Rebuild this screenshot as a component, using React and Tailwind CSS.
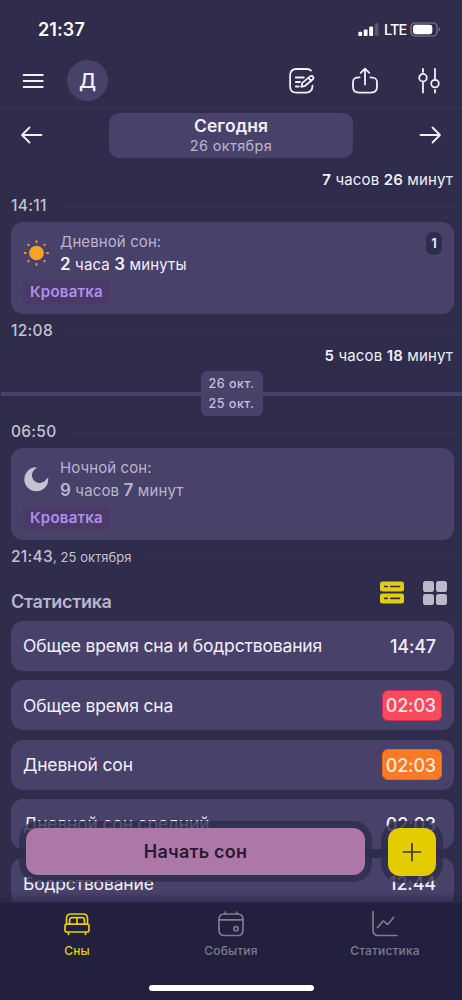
import React from "react";

function StatusBar() {
  return (
    <div className="flex h-[54px] items-center justify-between pt-[5px] pl-[38px] pr-[21px]">
      <span className="text-[18px] font-semibold tracking-[0.1px] text-white">21:37</span>
      <div className="flex items-center">
        <svg width="21" height="14" viewBox="0 0 21 14" fill="#fff">
          <rect x="0.3" y="8.8" width="3.9" height="4.2" rx="1" />
          <rect x="5.7" y="6.6" width="3.9" height="6.4" rx="1" />
          <rect x="11.2" y="3.6" width="3.9" height="9.4" rx="1" />
          <rect x="16.7" y="0.3" width="3.7" height="12.7" rx="1" opacity="0.2" />
        </svg>
        <span className="ml-[5px] w-[22px] text-[14.500px] leading-[18px] font-medium tracking-[-0.900px] text-white">LTE</span>
        <svg className="ml-[4px]" width="31" height="15" viewBox="0 0 31 15">
          <rect x="1" y="1" width="26" height="13" rx="4" fill="none" stroke="#fff" strokeOpacity="0.4" strokeWidth="1.2" />
          <rect x="3" y="2.800" width="19.3" height="9.4" rx="2.4" fill="#fff" />
          <path d="M28.8 5.2v4.4c1.4-.6 1.4-3.8 0-4.4z" fill="#fff" opacity="0.45" />
        </svg>
      </div>
    </div>
  );
}

function Header() {
  return (
    <header className="flex h-[54px] items-center border-b border-[#3b365a] pl-[22px] pr-[20px]">
      <svg width="22" height="16" viewBox="0 0 22 16" stroke="#f2effc" strokeWidth="1.8" strokeLinecap="round">
        <path d="M1.6 2h19.2M1.6 8h19.2M1.6 14h19.2" />
      </svg>
      <div className="ml-[23px] flex size-[41px] items-center justify-center rounded-full bg-[#48416a] pt-[2px] text-[20.500px] font-medium text-[#f2effc]">Д</div>
      <svg className="ml-auto" width="28" height="28" viewBox="0 0 28 28" fill="none" stroke="#f2effc" strokeWidth="1.800" strokeLinecap="round" strokeLinejoin="round">
        <path d="M23 3.6C22 2.400 20.500 2 18.500 2H8.500C4 2 2.100 3.900 2.100 8.400v10.800c0 4.500 1.900 6.400 6.400 6.400h9.600c4.500 0 6.400-1.900 6.400-7" />
        <path d="M7.800 10.500h8M7.800 15h4.200M7.800 19.500h3" />
        <path d="M13.400 19.800l.9-3.900 7.800-6.500c1-.8 2.200-.6 2.900.3.700.9.500 2-.4 2.800l-7.500 6.300zM20.500 10.900l2.700 3.100" />
      </svg>
      <svg className="ml-[35px]" width="28" height="28" viewBox="0 0 28 28" fill="none" stroke="#f2effc" strokeWidth="1.800" strokeLinecap="round" strokeLinejoin="round">
        <path d="M14 17.500V2M9.700 5.900L14 1.600l4.300 4.300" />
        <path d="M8.600 10.300C4 10.300 2 11.500 2 15.500v4.300c0 4.300 1.800 5.800 6 5.800h12c4.200 0 6-1.500 6-5.800v-4.300c0-4-2-5.200-6.600-5.200" />
      </svg>
      <svg className="ml-[37px]" width="26" height="28" viewBox="0 0 26 28" fill="none" stroke="#f2effc" strokeWidth="1.800" strokeLinecap="round">
        <path d="M7 2v3M7 16v9.500M19 2v11M19 23v2.500" />
        <circle cx="7" cy="10.700" r="3.800" />
        <circle cx="19" cy="16.600" r="3.800" />
      </svg>
    </header>
  );
}

function DateBar() {
  return (
    <div className="flex h-[54px] items-center justify-between px-[20px]">
      <svg width="24" height="18" viewBox="0 0 24 18" fill="none" stroke="#f2effc" strokeWidth="1.8" strokeLinecap="round" strokeLinejoin="round">
        <path d="M21.500 9H2M9.500 1.500L2 9l7.500 7.500" />
      </svg>
      <div className="flex h-[45px] w-[244px] flex-col items-center rounded-[10px] bg-[#48416a] pt-[2px]">
        <span className="text-[17.500px] leading-[22px] font-semibold tracking-[0.1px] text-[#f2effc]">Сегодня</span>
        <span className="text-[14.500px] leading-[17px] tracking-[0.350px] text-[#bab5cd]">26 октября</span>
      </div>
      <svg width="24" height="18" viewBox="0 0 24 18" fill="none" stroke="#f2effc" strokeWidth="1.8" strokeLinecap="round" strokeLinejoin="round">
        <path d="M2.500 9H22M14.500 1.500L22 9l-7.500 7.500" />
      </svg>
    </div>
  );
}

function TimeMark({ time, date }) {
  return (
    <div className="flex h-[18px] items-center gap-4 pl-[11px] pr-[5px]">
      <span className="text-[15.500px] leading-[18px] font-medium tracking-[0.3px] whitespace-nowrap text-[#c5c1d3]">
        {time}
        {date && <span className="text-[13px] font-normal tracking-[0.050px]">, {date}</span>}
      </span>
      <div className="h-px flex-1 bg-[#373253]" />
    </div>
  );
}

function Awake({ h, m }) {
  return (
    <div className="flex h-[18px] shrink-0 items-center justify-end pr-[9px] text-[15px] tracking-[0.150px] text-[#f2effc]">
      <span className="whitespace-pre"><b className="font-semibold">{h}</b> часов <b className="font-semibold">{m}</b> минут</span>
    </div>
  );
}

function Sun() {
  return (
    <svg width="26" height="26" viewBox="0 0 26 26" fill="#f8a325" stroke="#f8a325" strokeWidth="1.8" strokeLinecap="round">
      <circle cx="13.500" cy="13" r="6.400" />
      <path d="M13.500 1.200v1M13.500 23.800v1M1.700 13h1M24.100 13h1M5.200 4.700l.5.500M21.300 20.800l.5.500M21.800 4.700l-.5.500M5.700 20.800l-.5.500" />
    </svg>
  );
}

function Moon() {
  return (
    <svg width="26" height="26" viewBox="0 0 26 26" fill="#c6c3d1">
      <path d="M12.800 1.300A12 12 0 1 0 25.300 13C25.200 11.800 24.500 11.700 23.800 12.800C21.800 16 18.500 17.600 15 16.700C10.700 15.500 8.300 11.800 9.100 7.700C9.500 5.500 11 3.800 12.900 2.500C13.700 1.800 13.600 1.200 12.800 1.300Z" />
    </svg>
  );
}

function SleepCard({ icon, title, children, count, valueClass }) {
  return (
    <div className="mr-[8px] ml-[11px] flex h-[92px] shrink-0 items-start rounded-[12px] bg-[#48416a] pt-[10px] pr-[12px] pl-[12px]">
      <div className="flex flex-1 flex-col items-start">
        <div className="flex items-start">
          <div className="mt-[8px]">{icon}</div>
          <div className="ml-[11px] flex flex-col">
            <span className="text-[15px] leading-[20px] tracking-[0.100px] text-[#bab5cd]">{title}</span>
            <span className={valueClass}>{children}</span>
          </div>
        </div>
        <div className="mt-[3px] flex h-[24px] items-center rounded-[5px] bg-[#4b3a68] px-[7px] text-[15px] font-semibold tracking-[0.250px] text-[#ae90ee]">Кроватка</div>
      </div>
      {count && <div className="flex h-[23px] w-[16px] items-center justify-center rounded-[7px] bg-[#302c4b] text-[13px] font-semibold text-[#f2effc]">{count}</div>}
    </div>
  );
}

function DayDivider() {
  return (
    <div className="flex h-[45px] items-center pl-[1px]">
      <div className="h-[4px] flex-1 bg-[#48416a]" />
      <div className="flex h-[45px] w-[62px] flex-col items-center justify-center rounded-[6px] bg-[#48416a] pt-[1px] text-[12.500px] leading-[20px] font-medium tracking-[0.5px] text-[#c5c1d3]">
        <span>26 окт.</span>
        <span>25 окт.</span>
      </div>
      <div className="h-[4px] flex-1 bg-[#48416a]" />
    </div>
  );
}

const stats = [
  { name: "Общее время сна и бодрствования", value: "14:47", tone: "border-transparent text-[#f2effc]" },
  { name: "Общее время сна", value: "02:03", tone: "border-[#cf2d4f] bg-[#fc4a5c] text-[#ffe3e6]" },
  { name: "Дневной сон", value: "02:03", tone: "border-[#e2691f] bg-[#ff7a24] text-[#ffe9da]" },
  { name: "Дневной сон средний", value: "02:03", tone: "border-transparent text-[#f2effc]" },
  { name: "Бодрствование", value: "12:44", tone: "border-transparent text-[#f2effc]" },
];

function Statistics() {
  return (
    <section className="pr-[8px] pl-[11px]">
      <div className="flex h-[42px] justify-between">
        <h2 className="mt-[11px] text-[18px] leading-[24px] font-semibold tracking-[-0.300px] text-[#bab5cd]">Статистика</h2>
        <div className="flex gap-[17px] pr-[6px]">
          <svg className="mt-[1px]" width="26" height="26" viewBox="0 0 26 26">
            <g fill="#e3cc14"><rect x="1" y="1.500" width="24" height="10" rx="2.200" /><rect x="1" y="13.500" width="24" height="10" rx="2.200" /></g>
            <path d="M5.800 6.500h2.400M11.800 6.500h8.600M5.800 18.300h2.400M11.800 18.300h8.600" stroke="#302c4b" strokeWidth="1.700" strokeLinecap="round" />
          </svg>
          <svg width="26" height="26" viewBox="0 0 26 26" fill="#bdb9cb">
            <rect x="1" y="2" width="11" height="11" rx="2.800" /><rect x="14" y="2" width="11" height="11" rx="2.800" /><rect x="1" y="15" width="11" height="11" rx="2.800" /><rect x="14" y="15" width="11" height="11" rx="2.800" />
          </svg>
        </div>
      </div>
      <div className="flex flex-col gap-[9.300px]">
        {stats.map((s) => (
          <div key={s.name} className="flex h-[50px] shrink-0 items-center justify-between rounded-[12px] bg-[#48416a] pr-[12px] pl-[12px]">
            <span className="pt-[1px] text-[17.500px] tracking-[-0.170px] text-[#f2effc]">{s.name}</span>
            <span className={"flex h-[31px] w-[60px] items-center justify-end rounded-[6px] border pt-px pr-[5px] text-[18px] font-medium tracking-[-0.150px] " + s.tone}>{s.value}</span>
          </div>
        ))}
      </div>
    </section>
  );
}

function Actions() {
  return (
    <div className="absolute inset-x-0 top-[828px] flex items-start pr-[26px] pl-[26px]">
      <button className="h-[47px] w-[339px] rounded-[12px] bg-[#ad78a8] text-[18px] font-semibold tracking-[0.200px] text-[#2a1830] shadow-[0_0_0_7px_rgba(48,44,75,0.8)]">Начать сон</button>
      <button className="ml-auto flex h-[48px] w-[48px] items-center justify-center rounded-[12px] bg-[#e3cc00] shadow-[0_0_0_7px_rgba(48,44,75,0.8)]">
        <svg width="20" height="20" viewBox="0 0 20 20" stroke="#40350f" strokeWidth="1.700" strokeLinecap="round"><path d="M10 1.500v17M1.500 10h17" /></svg>
      </button>
    </div>
  );
}

function Tab({ label, tone, children }) {
  return (
    <div className={"flex flex-1 flex-col items-center pt-[7px] " + tone}>
      <svg width="28" height="28" viewBox="0 0 28 28" fill="none" stroke="currentColor" strokeWidth="1.700" strokeLinecap="round" strokeLinejoin="round">{children}</svg>
      <span className="mt-[5px] text-[12px] leading-[16px] font-medium tracking-[0.150px]">{label}</span>
    </div>
  );
}

function TabBar() {
  return (
    <nav className="relative h-[98px] border-t border-[#2c2846] bg-[#231f3f]">
      <div className="flex">
        <Tab label="Сны" tone="text-[#e6cf0c]">
          <path d="M3.500 14V8.500C3.500 5.500 5 4 8 4h12c3 0 4.500 1.500 4.500 4.500V14" />
          <path d="M6.600 14V10c0-1.500.8-2.300 2.300-2.300h10.200c1.500 0 2.300.8 2.300 2.300v4M14 8v5.500" />
          <rect x="2" y="14.200" width="24" height="7.800" rx="2" />
          <path d="M5.500 22.500v2M22.500 22.500v2" />
        </Tab>
        <Tab label="События" tone="text-[#7f7c8c]">
          <rect x="2" y="4" width="24" height="21.500" rx="5" />
          <path d="M2 9.800h24M8.300 2v2M19.700 2v2" />
          <circle cx="19" cy="18.800" r="2.200" />
        </Tab>
        <Tab label="Статистика" tone="text-[#7f7c8c]">
          <path d="M2 1.500v18.500c0 3.700 1.700 5.500 5.500 5.500h18.500" />
          <path d="M6.500 17.500l5.200-6c.5-.6 1.100-.6 1.600 0l2.300 2.300c.6.600 1.200.5 1.700-.1L22.500 7.500" />
        </Tab>
      </div>
      <div className="mx-auto mt-[26px] h-[6px] w-[165px] rounded-full bg-white" />
    </nav>
  );
}

export default function App() {
  return (
    <div className="relative flex h-[1000px] w-[462px] flex-col overflow-hidden bg-[#302c4b] font-['Inter','Noto_Sans',sans-serif]">
      <StatusBar />
      <Header />
      <DateBar />
      <main className="flex h-[740px] flex-col overflow-hidden pt-[9px]">
        <Awake h="7" m="26" />
        <div className="mt-[8px] mb-[7px]"><TimeMark time="14:11" /></div>
        <SleepCard icon={<Sun />} title="Дневной сон:" count="1" valueClass="text-[15px] leading-[24px] tracking-[0.140px] text-[#f2effc]">
          <b className="text-[17px] font-semibold">2</b> часа <b className="text-[17px] font-semibold">3</b> минуты
        </SleepCard>
        <div className="mt-[8px] mb-[7px]"><TimeMark time="12:08" /></div>
        <Awake h="5" m="18" />
        <div className="mt-[6px] mb-[7px]"><DayDivider /></div>
        <div className="mb-[7px]"><TimeMark time="06:50" /></div>
        <SleepCard icon={<Moon />} title="Ночной сон:" valueClass="text-[15px] leading-[24px] tracking-[0.140px] text-[#bab5cd]">
          <b className="text-[17px] font-semibold">9</b> часов <b className="text-[17px] font-semibold">7</b> минут
        </SleepCard>
        <div className="mt-[8px] mb-[13px]"><TimeMark time="21:43" date="25 октября" /></div>
        <Statistics />
      </main>
      <div className="absolute inset-x-0 top-[892px] h-[10px] bg-linear-to-b from-transparent to-[#231f3f]/50" />
      <TabBar />
      <Actions />
    </div>
  );
}
